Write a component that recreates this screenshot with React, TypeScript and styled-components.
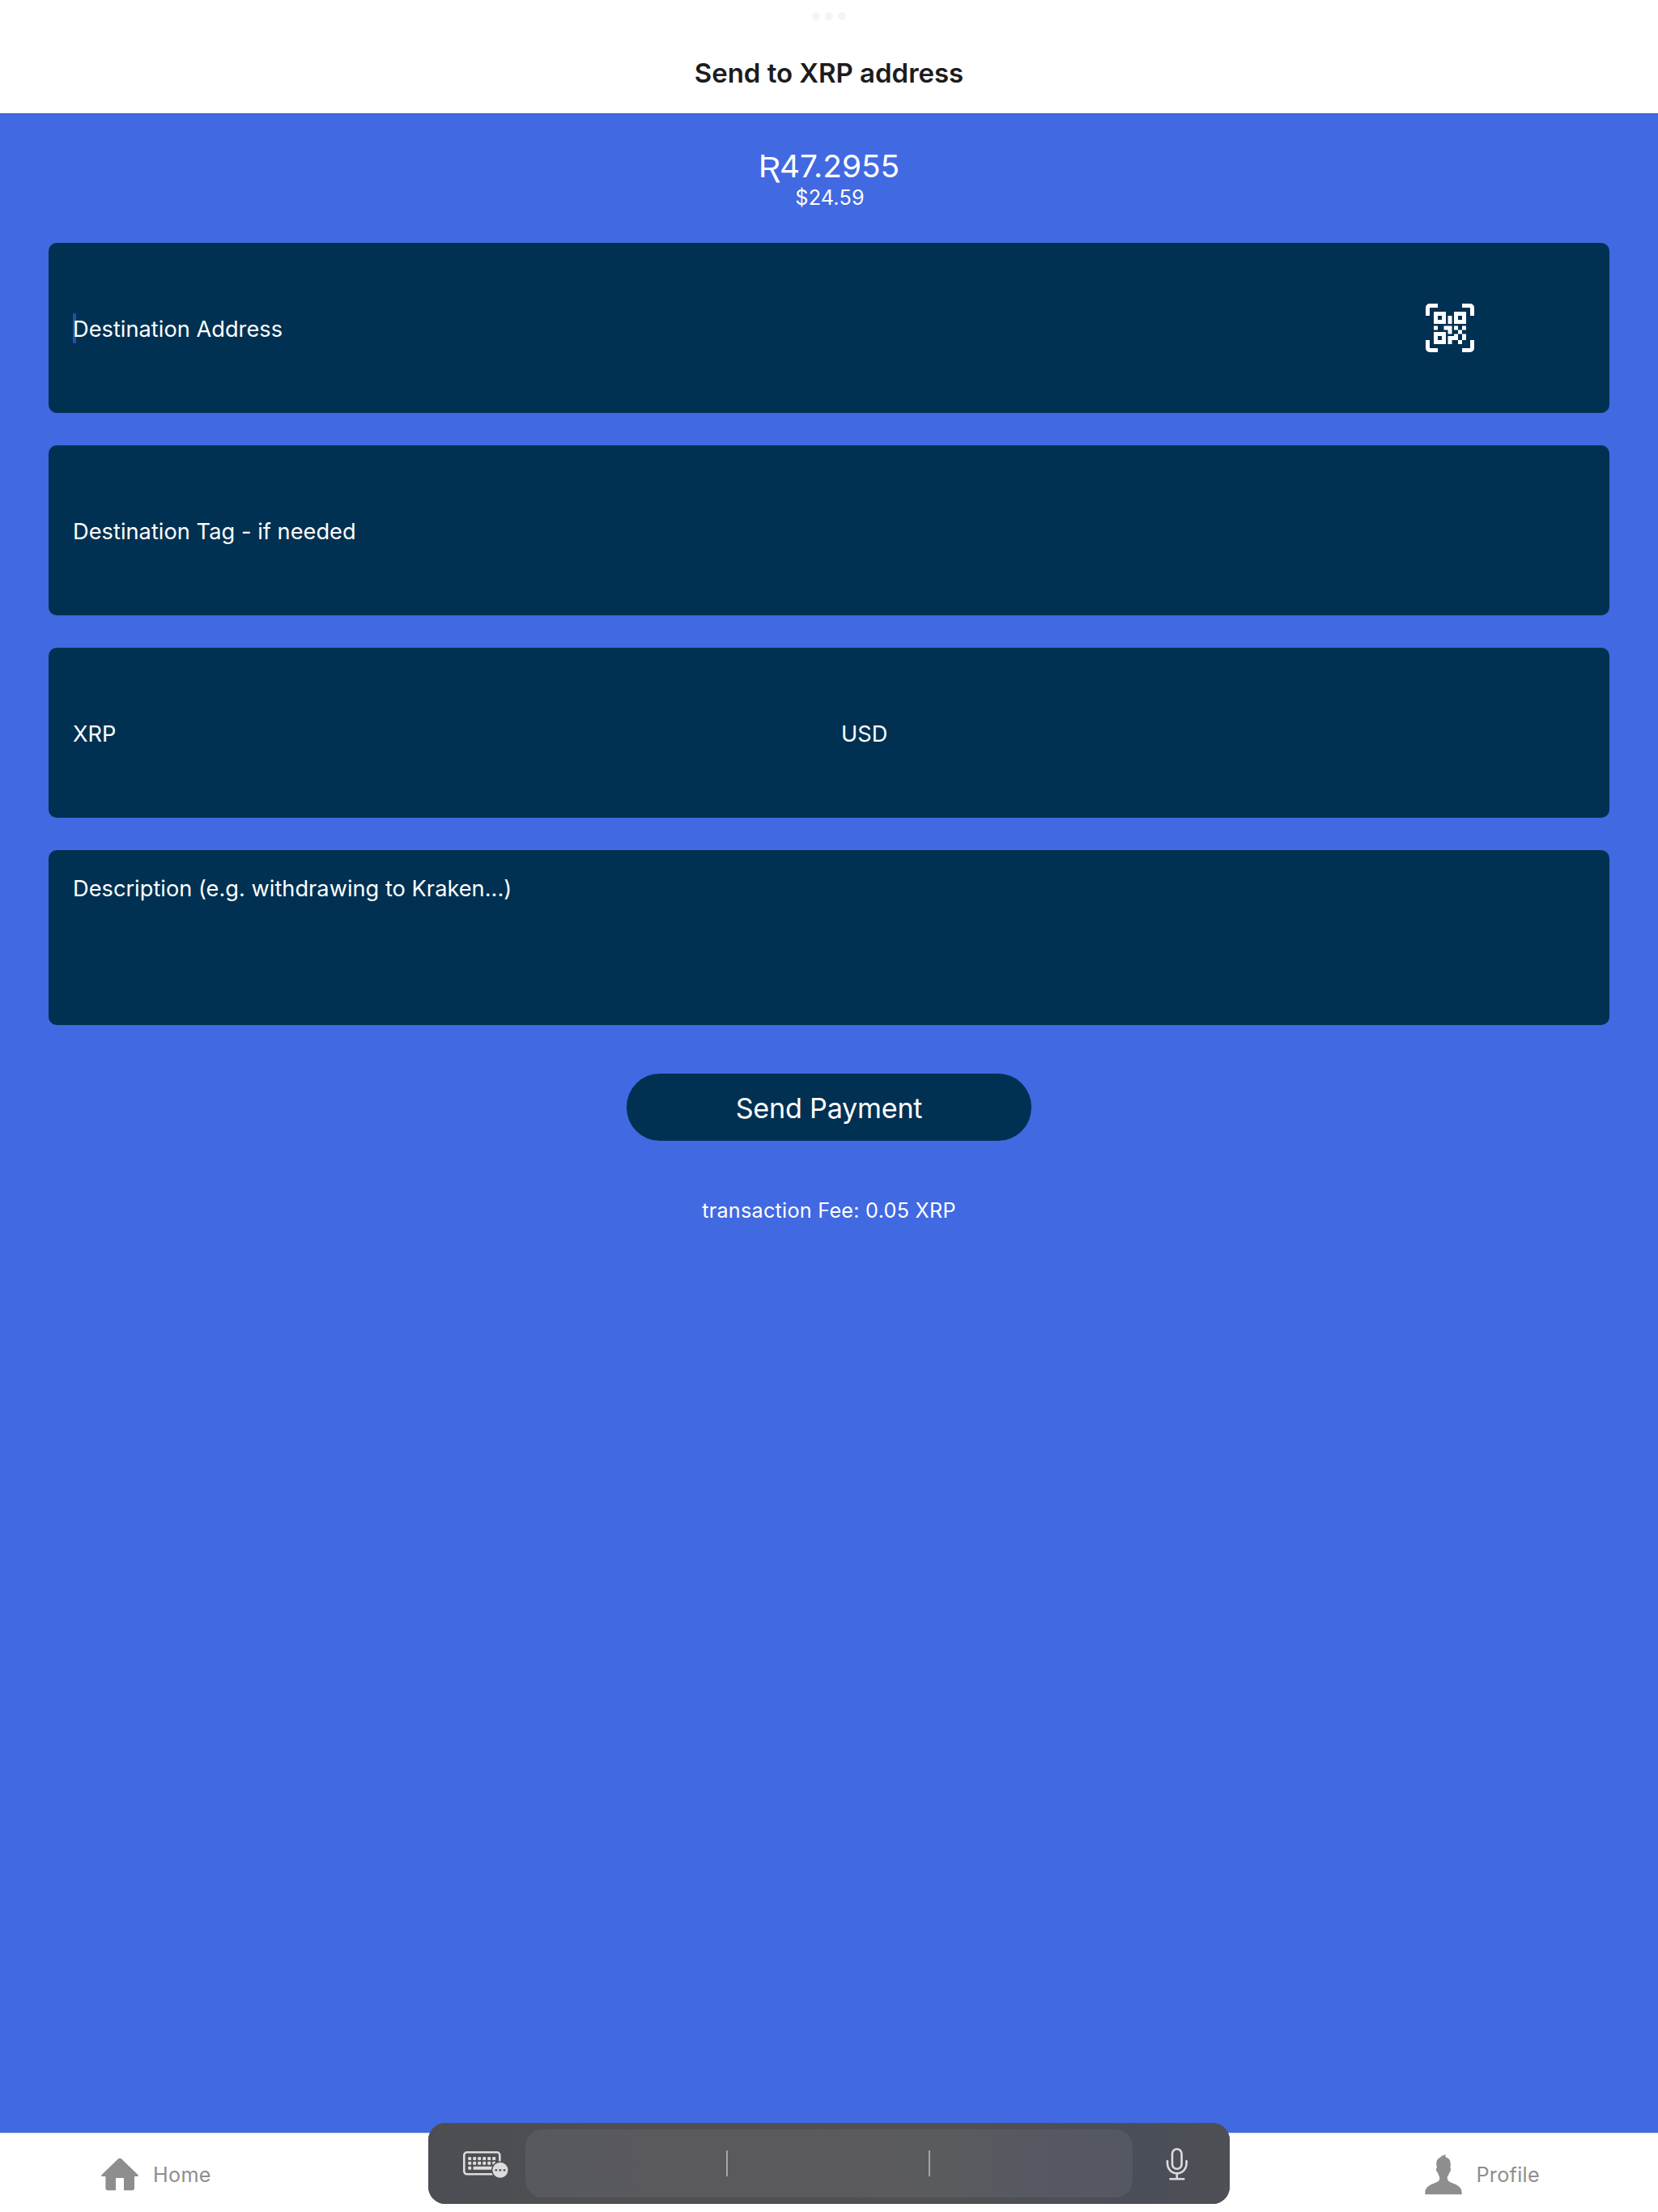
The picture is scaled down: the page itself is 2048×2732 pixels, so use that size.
import React from 'react';
import styled, { createGlobalStyle } from 'styled-components';

const ROYAL = '#4169e1';
const NAVY = '#003152';
const TAB_GREY = '#8e8e8e';

const GlobalStyle = createGlobalStyle`
  *, *::before, *::after { box-sizing: border-box; }
  html, body { margin: 0; padding: 0; background: ${ROYAL}; }
  body { font-family: Inter, "Liberation Sans", sans-serif; }
`;

const Screen = styled.div`
  position: relative;
  display: flex;
  flex-direction: column;
  width: 2048px;
  height: 2732px;
  overflow: hidden;
  background: ${ROYAL};
`;

const Header = styled.header`
  display: flex;
  flex-direction: column;
  align-items: center;
  flex: none;
  height: 141px;
  padding-top: 15px;
  background: #fff;
  border-bottom: 1px solid #2f4da5;
`;

const Multitask = styled.div`
  display: flex;
  gap: 6px;
`;

const Dot = styled.span`
  width: 10px;
  height: 10px;
  border-radius: 50%;
  background: #f4f4f4;
`;

const Title = styled.h1`
  margin: 40px 0 0;
  font-size: 33px;
  font-weight: 600;
  line-height: 50px;
  letter-spacing: -0.03px;
  color: #1c1c1e;
  white-space: nowrap;
`;

const Content = styled.main`
  display: flex;
  flex-direction: column;
  align-items: center;
  flex: 1;
  padding: 39px 60px 0;
`;

const Balance = styled.div`
  display: flex;
  align-items: baseline;
  height: 50px;
  font-size: 38.8px;
  line-height: 50px;
  color: #fff;
`;

const CurrencyMark = styled.span`
  width: 26px;
  font-family: "Liberation Sans", "Noto Sans", sans-serif;
  font-size: 40px;
  line-height: 50px;
`;

const Fiat = styled.div`
  height: 30px;
  padding-left: 2px;
  font-size: 25.2px;
  line-height: 29px;
  letter-spacing: 0.17px;
  color: #fff;
`;

const Form = styled.div`
  display: flex;
  flex-direction: column;
  gap: 40px;
  width: 100%;
  margin-top: 40px;
`;

const Field = styled.div<{ $multiline?: boolean }>`
  display: flex;
  align-items: ${(p) => (p.$multiline ? 'flex-start' : 'center')};
  height: ${(p) => (p.$multiline ? 216 : 210)}px;
  padding: ${(p) => (p.$multiline ? '31px' : '4px')} 30px 0;
  border-radius: 10px;
  background: ${NAVY};
`;

const SplitField = styled(Field)`
  display: grid;
  grid-template-columns: 1fr 1fr;
`;

const Placeholder = styled.span<{ $inset?: number; $spacing?: number }>`
  position: relative;
  padding-left: ${(p) => p.$inset ?? 0}px;
  font-size: 27.2px;
  line-height: 34px;
  letter-spacing: ${(p) => p.$spacing ?? 0}px;
  color: #fff;
  white-space: nowrap;
`;

const Caret = styled.i`
  position: absolute;
  left: 0;
  top: -3px;
  z-index: -1;
  width: 4px;
  height: 37px;
  border-radius: 1px;
  background: #264fa8;
`;

const FocusedPlaceholder = styled(Placeholder)`
  z-index: 0;
`;

const ScanButton = styled.button`
  display: flex;
  margin: -4px 137px 0 auto;
  padding: 0;
  border: 0;
  background: none;
  color: #fff;
`;

const SendButton = styled.button`
  display: flex;
  align-items: center;
  justify-content: center;
  width: 500px;
  height: 83px;
  margin-top: 60px;
  padding: 2px 0 0;
  border: 0;
  border-radius: 41px;
  background: ${NAVY};
  font-family: inherit;
  font-size: 34.2px;
  line-height: 42px;
  letter-spacing: -0.25px;
  color: #fff;
`;

const Fee = styled.p`
  margin: 71px 0 0;
  font-size: 25.2px;
  line-height: 30px;
  letter-spacing: 0.26px;
  color: #fff;
`;

const TabBar = styled.nav`
  display: flex;
  justify-content: space-between;
  flex: none;
  height: 98px;
  padding: 0 146px 0 125px;
  border-top: 1px solid #d5d8e4;
  background: #fff;
`;

const Tab = styled.a<{ $gap: number }>`
  display: flex;
  align-items: center;
  gap: ${(p) => p.$gap}px;
  height: 102px;
  font-size: 25.2px;
  line-height: 30px;
  letter-spacing: 0.3px;
  color: ${TAB_GREY};
`;

const KeyboardBar = styled.div`
  position: absolute;
  left: 529px;
  bottom: 10px;
  display: flex;
  align-items: center;
  width: 990px;
  height: 100px;
  border-radius: 21px;
  background: linear-gradient(90deg, #4c4e53 0%, #4f5053 30%, #505153 65%, #4a4e58 88%, #4e5054 100%);
  box-shadow: inset 0 0 1px 1px rgba(80, 82, 84, 0.9);
  color: #dcdcdd;
`;

const BarKey = styled.span<{ $lead: number; $drop: number }>`
  display: flex;
  flex: none;
  width: 120px;
  padding: ${(p) => p.$drop}px 0 0 ${(p) => p.$lead}px;
`;

const Suggestions = styled.div`
  display: grid;
  grid-template-columns: 250px 250px 1fr;
  align-items: center;
  flex: 1;
  height: 84px;
  border-radius: 21px;
  background: linear-gradient(90deg, #58595e 0%, #5a5a5e 40%, #5a5b5e 70%, #555863 88%, #555863 100%);
`;

const Slot = styled.span<{ $divided?: boolean }>`
  height: 32px;
  border-right: ${(p) => (p.$divided ? '2px solid #a4a5a8' : '0')};
`;

const QrScanIcon = () => (
  <svg width="60" height="60" viewBox="0 0 24 24" fill="currentColor">
    <path d="M4,4H10V10H4V4M20,4V10H14V4H20M14,15H16V13H14V11H16V13H18V11H20V13H18V15H20V18H18V20H16V18H13V20H11V16H14V15M16,15V18H18V15H16M4,20V14H10V20H4M6,6V8H8V6H6M16,6V8H18V6H16M6,16V18H8V16H6M4,11H6V13H4V11M9,11H13V15H11V13H9V11M11,6H13V10H11V6M2,2V6H0V2A2,2 0 0,1 2,0H6V2H2M22,0A2,2 0 0,1 24,2V6H22V2H18V0H22M2,18V22H6V24H2A2,2 0 0,1 0,22V18H2M22,22V18H24V22A2,2 0 0,1 22,24H18V22H22Z" />
  </svg>
);

const HomeIcon = () => (
  <svg width="46" height="42" viewBox="0 0 46 42" fill="currentColor">
    <path d="M21.300 1.100Q23 -.2 24.700 1.100L45.600 21.200Q46.400 22.700 45 22.900H41V37.500Q41 40.300 38.200 40.300H28V25H18V40.300H8.200Q5.400 40.300 5.400 37.500V22.900H1Q-.4 22.700 .4 21.200Z" />
  </svg>
);

const PersonIcon = () => (
  <svg width="46" height="50" viewBox="0 0 138 150" fill="currentColor">
    <path d="M80 1C72 1 64 4 59 9C50 14 43 20 43 34C43 40 44 46 45 50C41 50 41 54 43 61C44 65 46 67 48 67C49 76 55 81 55 87C54 99 48 101 38 105C20 112 1 119 1 142V148H137V142C137 119 118 112 100 105C90 101 85 98 83 87C83 81 89 76 91 67C93 67 95 65 95 61C97 54 97 50 94 50C95 44 96 39 95 32C94 22 90 15 83 12C79 11 75 8 76 5C77 3 78 2 80 1Z" />
  </svg>
);

const keyColumns = [0, 1, 2, 3, 4, 5];

const KeyboardIcon = () => (
  <svg width="56" height="36" viewBox="0 0 56 36" fill="none">
    <rect x="1.300" y="3.300" width="44" height="27" rx="3.500" stroke="currentColor" strokeWidth="2.600" />
    {[9, 14.800].map((y) =>
      keyColumns.map((c) => (
        <rect key={`${y}-${c}`} x={6.200 + c * 6} y={y} width="4" height="4" rx="1" fill="currentColor" />
      )),
    )}
    <rect x="6.200" y="20.700" width="4" height="4" rx="1" fill="currentColor" />
    <rect x="12.500" y="20.700" width="26" height="4" rx="1" fill="currentColor" />
    <circle cx="45.900" cy="25.300" r="11" fill="#4e5055" />
    <circle cx="45.900" cy="25.300" r="9.500" fill="currentColor" />
    <circle cx="40.800" cy="25.300" r="1.400" fill="#4e5055" />
    <circle cx="45.900" cy="25.300" r="1.400" fill="#4e5055" />
    <circle cx="51" cy="25.300" r="1.400" fill="#4e5055" />
  </svg>
);

const MicIcon = () => (
  <svg width="28" height="42" viewBox="0 0 28 42" fill="none" stroke="currentColor" strokeWidth="2.600" strokeLinecap="round">
    <rect x="8" y="2.300" width="11.600" height="24.500" rx="5.800" />
    <path d="M2 17V19.500C2 27 7 32.300 13.800 32.300S25.600 27 25.600 19.500V17M13.800 32.300V39M5.500 39.200H22.300" />
  </svg>
);

export default function App() {
  return (
    <>
      <GlobalStyle />
      <Screen>
        <Header>
          <Multitask>
            <Dot />
            <Dot />
            <Dot />
          </Multitask>
          <Title>Send to XRP address</Title>
        </Header>

        <Content>
          <Balance>
            <CurrencyMark>Ʀ</CurrencyMark>
            47.2955
          </Balance>
          <Fiat>$24.59</Fiat>

          <Form>
            <Field>
              <FocusedPlaceholder $spacing={0.03}>
                <Caret />
                Destination Address
              </FocusedPlaceholder>
              <ScanButton aria-label="Scan QR code">
                <QrScanIcon />
              </ScanButton>
            </Field>
            <Field>
              <Placeholder $spacing={0.04}>Destination Tag - if needed</Placeholder>
            </Field>
            <SplitField>
              <Placeholder>XRP</Placeholder>
              <Placeholder $inset={15}>USD</Placeholder>
            </SplitField>
            <Field $multiline>
              <Placeholder $spacing={0.02}>Description (e.g. withdrawing to Kraken...)</Placeholder>
            </Field>
          </Form>

          <SendButton>Send Payment</SendButton>
          <Fee>transaction Fee: 0.05 XRP</Fee>
        </Content>

        <TabBar>
          <Tab $gap={18}>
            <HomeIcon />
            Home
          </Tab>
          <Tab $gap={17}>
            <PersonIcon />
            Profile
          </Tab>
        </TabBar>

        <KeyboardBar>
          <BarKey $lead={43} $drop={2}>
            <KeyboardIcon />
          </BarKey>
          <Suggestions>
            <Slot $divided />
            <Slot $divided />
            <Slot />
          </Suggestions>
          <BarKey $lead={41} $drop={2}>
            <MicIcon />
          </BarKey>
        </KeyboardBar>
      </Screen>
    </>
  );
}
